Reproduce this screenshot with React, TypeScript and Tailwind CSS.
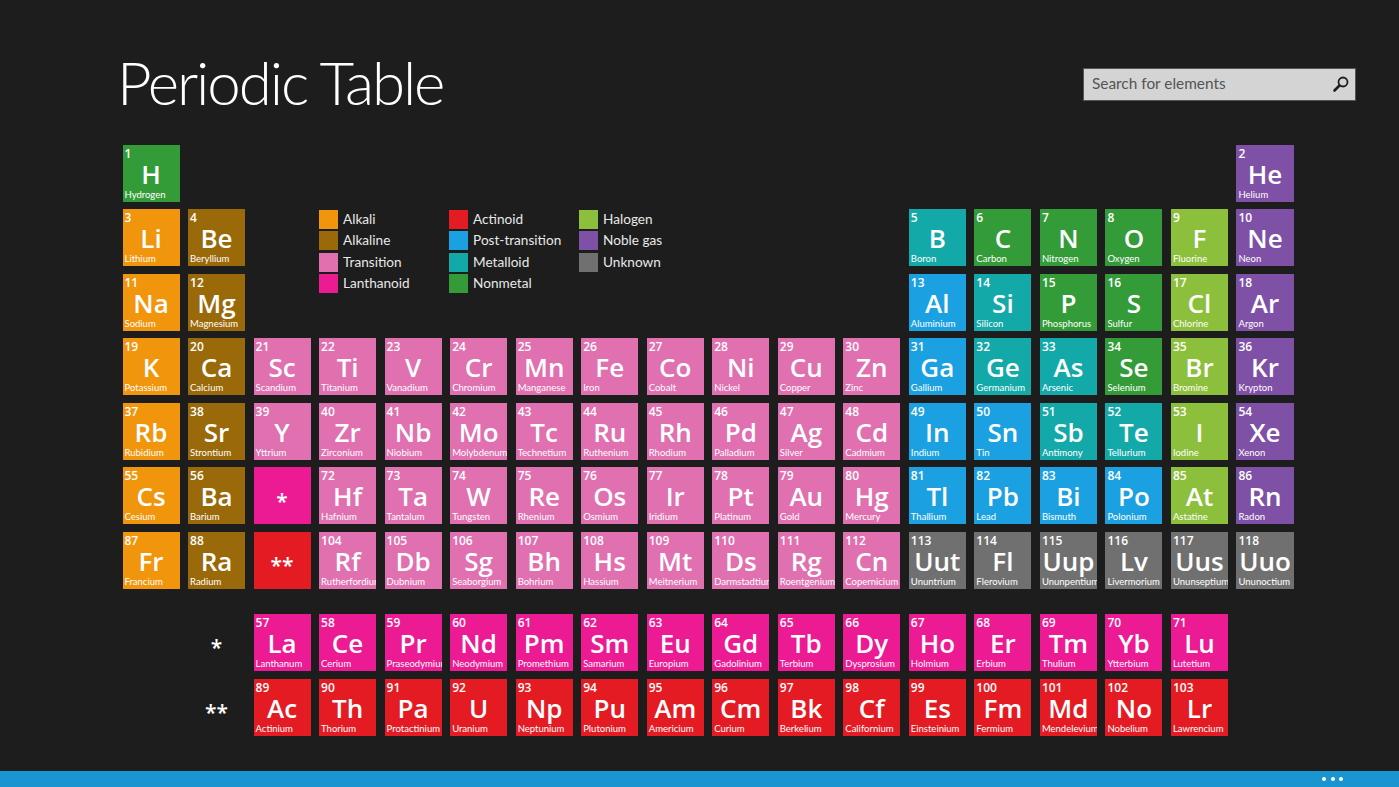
const COLORS: Record<string, string> = {
  al: 'bg-[#f0950c]',
  ae: 'bg-[#99690a]',
  tr: 'bg-[#e070b0]',
  la: 'bg-[#ec1a93]',
  ac: 'bg-[#e51b24]',
  pt: 'bg-[#1ba1e2]',
  md: 'bg-[#14a9a9]',
  nm: 'bg-[#339c38]',
  ha: 'bg-[#8cc03c]',
  ng: 'bg-[#7e50a6]',
  un: 'bg-[#707070]',
};

const LEGEND = [
  [['al', 'Alkali'], ['ae', 'Alkaline'], ['tr', 'Transition'], ['la', 'Lanthanoid']],
  [['ac', 'Actinoid'], ['pt', 'Post-transition'], ['md', 'Metalloid'], ['nm', 'Nonmetal']],
  [['ha', 'Halogen'], ['ng', 'Noble gas'], ['un', 'Unknown']],
];

// [row, first column, first atomic number, "Sym Name cat" list]
type Segment = [number, number, number, string];

const MAIN: Segment[] = [
  [1, 1, 1, 'H Hydrogen nm'],
  [1, 18, 2, 'He Helium ng'],
  [2, 1, 3, 'Li Lithium al,Be Beryllium ae'],
  [2, 13, 5, 'B Boron md,C Carbon nm,N Nitrogen nm,O Oxygen nm,F Fluorine ha,Ne Neon ng'],
  [3, 1, 11, 'Na Sodium al,Mg Magnesium ae'],
  [3, 13, 13, 'Al Aluminium pt,Si Silicon md,P Phosphorus nm,S Sulfur nm,Cl Chlorine ha,Ar Argon ng'],
  [4, 1, 19, 'K Potassium al,Ca Calcium ae,Sc Scandium tr,Ti Titanium tr,V Vanadium tr,Cr Chromium tr,Mn Manganese tr,Fe Iron tr,Co Cobalt tr,Ni Nickel tr,Cu Copper tr,Zn Zinc tr,Ga Gallium pt,Ge Germanium md,As Arsenic md,Se Selenium nm,Br Bromine ha,Kr Krypton ng'],
  [5, 1, 37, 'Rb Rubidium al,Sr Strontium ae,Y Yttrium tr,Zr Zirconium tr,Nb Niobium tr,Mo Molybdenum tr,Tc Technetium tr,Ru Ruthenium tr,Rh Rhodium tr,Pd Palladium tr,Ag Silver tr,Cd Cadmium tr,In Indium pt,Sn Tin pt,Sb Antimony md,Te Tellurium md,I Iodine ha,Xe Xenon ng'],
  [6, 1, 55, 'Cs Cesium al,Ba Barium ae'],
  [6, 4, 72, 'Hf Hafnium tr,Ta Tantalum tr,W Tungsten tr,Re Rhenium tr,Os Osmium tr,Ir Iridium tr,Pt Platinum tr,Au Gold tr,Hg Mercury tr,Tl Thallium pt,Pb Lead pt,Bi Bismuth pt,Po Polonium pt,At Astatine ha,Rn Radon ng'],
  [7, 1, 87, 'Fr Francium al,Ra Radium ae'],
  [7, 4, 104, 'Rf Rutherfordium tr,Db Dubnium tr,Sg Seaborgium tr,Bh Bohrium tr,Hs Hassium tr,Mt Meitnerium tr,Ds Darmstadtium tr,Rg Roentgenium tr,Cn Copernicium tr,Uut Ununtrium un,Fl Flerovium un,Uup Ununpentium un,Lv Livermorium un,Uus Ununseptium un,Uuo Ununoctium un'],
];

const SERIES: Segment[] = [
  [1, 3, 57, 'La Lanthanum la,Ce Cerium la,Pr Praseodymium la,Nd Neodymium la,Pm Promethium la,Sm Samarium la,Eu Europium la,Gd Gadolinium la,Tb Terbium la,Dy Dysprosium la,Ho Holmium la,Er Erbium la,Tm Thulium la,Yb Ytterbium la,Lu Lutetium la'],
  [2, 3, 89, 'Ac Actinium ac,Th Thorium ac,Pa Protactinium ac,U Uranium ac,Np Neptunium ac,Pu Plutonium ac,Am Americium ac,Cm Curium ac,Bk Berkelium ac,Cf Californium ac,Es Einsteinium ac,Fm Fermium ac,Md Mendelevium ac,No Nobelium ac,Lr Lawrencium ac'],
];

function Cell({ num, sym, name, cat, row, col }: { num: number; sym: string; name: string; cat: string; row: number; col: number }) {
  return (
    <div
      style={{ gridRow: row, gridColumn: col }}
      className={`flex h-[57px] min-w-0 flex-col overflow-hidden px-[2px] text-white ${COLORS[cat]}`}
    >
      <div className="mt-[1px] h-[15px] text-[12px] font-semibold leading-[15px]">{num}</div>
      <div className="h-[27px] text-center text-[26px] font-semibold leading-[27px]">{sym}</div>
      <div className="mt-[1px] whitespace-nowrap font-['Lato',sans-serif] text-[9.5px] leading-[12px]">{name}</div>
    </div>
  );
}

function Cells({ segments }: { segments: Segment[] }) {
  return (
    <>
      {segments.flatMap(([row, col, first, list]) =>
        list.split(',').map((item, i) => {
          const [sym, name, cat] = item.split(' ');
          return <Cell key={sym} num={first + i} sym={sym} name={name} cat={cat} row={row} col={col + i} />;
        }),
      )}
    </>
  );
}

export default function App() {
  return (
    <div className="flex h-[787px] flex-col overflow-hidden bg-[#1d1d1d] font-['Open_Sans',sans-serif] text-white">
      <div className="flex-1">
        {/* Header */}
        <header className="flex h-[144.5px] items-start justify-between pl-[117px] pr-[43px]">
          <h1 className="mt-[43px] font-['Lato',sans-serif] text-[60px] font-light leading-[78px] tracking-[-2.1px]">Periodic Table</h1>
          <div className="mt-[68px] flex h-[33px] w-[273px] items-center justify-between border border-[#555] bg-[#d4d4d4] pb-[2px] pl-2 pr-[5px]">
            <span className="font-['Lato',sans-serif] text-[15.4px] text-[#555]">Search for elements</span>
            <svg viewBox="0 0 18 18" className="h-[18px] w-[18px] text-[#1d1d1d]" fill="none" stroke="currentColor">
              <circle cx="11" cy="7" r="4.5" strokeWidth="1.8" />
              <path d="M7.5 10.5 2.5 15.5" strokeWidth="2.6" strokeLinecap="round" />
            </svg>
          </div>
        </header>

        {/* Main table */}
        <div className="ml-[122.5px] grid w-[1171px] grid-cols-[repeat(18,minmax(0,1fr))] gap-x-[8.5px] gap-y-[7.5px]">
          <Cells segments={MAIN} />
          <div className="col-start-4 col-end-13 row-start-2 row-end-4 flex pt-[0.5px]">
            {LEGEND.map((column, i) => (
              <div key={i} className="flex w-[130px] flex-col gap-[2.5px]">
                {column.map(([cat, label]) => (
                  <div key={cat} className="flex h-[19px] items-center gap-[5px]">
                    <span className={`h-[19px] w-[19px] ${COLORS[cat]}`} />
                    <span className="font-['Lato',sans-serif] text-[13.6px] text-[#e8e8e8]">{label}</span>
                  </div>
                ))}
              </div>
            ))}
          </div>
          <div style={{ gridRow: 6, gridColumn: 3 }} className="flex h-[57px] items-center justify-center bg-[#ec1a93] pt-3 text-[21px] font-semibold">*</div>
          <div style={{ gridRow: 7, gridColumn: 3 }} className="flex h-[57px] items-center justify-center bg-[#e51b24] pt-3 text-[21px] font-semibold">**</div>
        </div>

        {/* Lanthanoids and actinoids */}
        <div className="ml-[122.5px] mt-[25px] grid w-[1171px] grid-cols-[repeat(18,minmax(0,1fr))] gap-x-[8.5px] gap-y-[8px]">
          <Cells segments={SERIES} />
          <div style={{ gridRow: 1, gridColumn: 2 }} className="flex items-center justify-center pt-3 text-[21px] font-semibold">*</div>
          <div style={{ gridRow: 2, gridColumn: 2 }} className="flex items-center justify-center pt-3 text-[21px] font-semibold">**</div>
        </div>
      </div>

      {/* App bar */}
      <footer className="flex h-4 items-center justify-end gap-[4.5px] bg-[#1b94d2] pr-[56px]">
        <span className="h-[4px] w-[4px] rounded-full bg-white" />
        <span className="h-[4px] w-[4px] rounded-full bg-white" />
        <span className="h-[4px] w-[4px] rounded-full bg-white" />
      </footer>
    </div>
  );
}
